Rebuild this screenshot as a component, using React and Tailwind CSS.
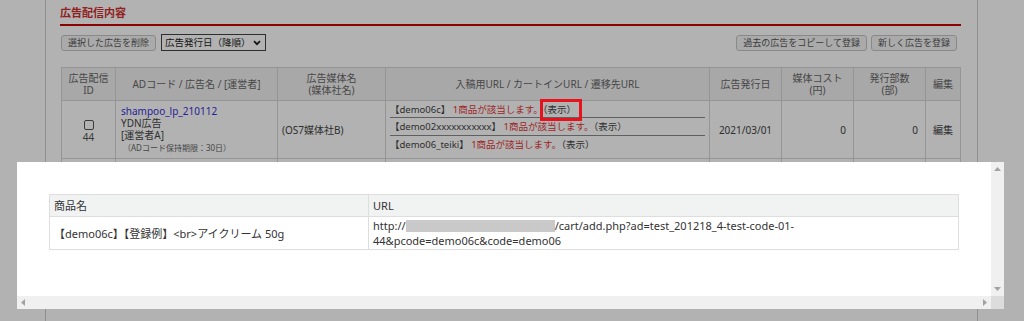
import React from "react";

const urlRows = [
  { code: "【demo06c】", mark: true },
  { code: "【demo02xxxxxxxxxxx】", mark: false },
  { code: "【demo06_teiki】", mark: false },
];

function TriUp() {
  return (
    <svg width="7" height="4" viewBox="0 0 7 4">
      <path d="M3.5 0 L7 4 L0 4 Z" fill="#a3a3a3" />
    </svg>
  );
}

function TriDown() {
  return (
    <svg width="7" height="4" viewBox="0 0 7 4">
      <path d="M0 0 L7 0 L3.5 4 Z" fill="#a3a3a3" />
    </svg>
  );
}

function TriLeft() {
  return (
    <svg width="4" height="7" viewBox="0 0 4 7">
      <path d="M4 0 L4 7 L0 3.5 Z" fill="#a3a3a3" />
    </svg>
  );
}

function TriRight() {
  return (
    <svg width="4" height="7" viewBox="0 0 4 7">
      <path d="M0 0 L4 3.5 L0 7 Z" fill="#a3a3a3" />
    </svg>
  );
}

export default function App() {
  return (
    <div className="relative h-[321px] w-[1024px] overflow-hidden bg-white font-['Noto_Sans','Noto_Sans_CJK_JP',sans-serif] text-[#444]">
      {/* page behind the dialog */}
      <div className="ml-[45px] h-full w-[933px] border-x border-[#cfcfcf] pl-[14px] pr-[16px]">
        <h2 className="pt-[7px] text-[11px] font-bold leading-[12px] text-[#d03030]">広告配信内容</h2>
        <div className="mt-[5px] h-[2px] bg-[#c80000]" />

        <div className="mt-[8px] flex h-[17px] items-center justify-between pl-px pr-[4px]">
          <div className="flex items-center gap-[5px]">
            <button className="h-[16px] whitespace-nowrap rounded-[3px] border border-[#c4c4c4] bg-[#f4f4f4] px-[6px] text-[9px] leading-[14px] text-[#555]">
              選択した広告を削除
            </button>
            <div className="flex h-[17px] w-[105px] items-center justify-between whitespace-nowrap border border-[#444] bg-white pl-[3px] pr-[4px] text-[9.5px] leading-[15px] text-[#222]">
              <span>広告発行日（降順）</span>
              <svg width="8" height="6" viewBox="0 0 8 6">
                <path d="M1 1.2 L4 4.2 L7 1.2" stroke="#222" strokeWidth="1.8" fill="none" />
              </svg>
            </div>
          </div>
          <div className="flex items-center gap-[4px]">
            <button className="h-[16px] whitespace-nowrap rounded-[3px] border border-[#c4c4c4] bg-[#f4f4f4] px-[6px] text-[9px] leading-[14px] text-[#555]">
              過去の広告をコピーして登録
            </button>
            <button className="h-[16px] whitespace-nowrap rounded-[3px] border border-[#c4c4c4] bg-[#f4f4f4] px-[6px] text-[9px] leading-[14px] text-[#555]">
              新しく広告を登録
            </button>
          </div>
        </div>

        <table className="ml-px mt-[16px] w-[899px] table-fixed border-collapse text-[10px] leading-[12px]">
          <colgroup>
            <col className="w-[54px]" />
            <col className="w-[162px]" />
            <col className="w-[108px]" />
            <col className="w-[324px]" />
            <col className="w-[72px]" />
            <col className="w-[72px]" />
            <col className="w-[72px]" />
            <col className="w-[35px]" />
          </colgroup>
          <thead>
            <tr className="h-[33px] bg-[#f1f1f1] text-[#666]">
              <th className="border border-[#d6d6d6] font-normal">広告配信<br />ID</th>
              <th className="border border-[#d6d6d6] font-normal">ADコード / 広告名 / [運営者]</th>
              <th className="border border-[#d6d6d6] font-normal">広告媒体名<br />(媒体社名)</th>
              <th className="border border-[#d6d6d6] font-normal">入稿用URL / カートインURL / 遷移先URL</th>
              <th className="border border-[#d6d6d6] font-normal">広告発行日</th>
              <th className="border border-[#d6d6d6] font-normal">媒体コスト<br />(円)</th>
              <th className="border border-[#d6d6d6] font-normal">発行部数<br />(部)</th>
              <th className="border border-[#d6d6d6] font-normal">編集</th>
            </tr>
          </thead>
          <tbody>
            <tr className="h-[58px]">
              <td className="border border-[#d6d6d6] text-center">
                <div className="flex flex-col items-center pt-[3px]">
                  <span className="h-[10px] w-[10px] rounded-[2px] border border-[#555] bg-white" />
                  <span className="mt-[1px] text-[#555]">44</span>
                </div>
              </td>
              <td className="border border-[#d6d6d6] pl-[5px]">
                <div className="text-[#3a2fd8]">shampoo_lp_210112</div>
                <div>YDN広告</div>
                <div>[運営者A]</div>
                <div className="pl-[2px] pt-[1px] text-[8px] leading-[12px] text-[#666]">（ADコード保持期限：30日）</div>
              </td>
              <td className="border border-[#d6d6d6] pl-[4px]">(OS7媒体社B)</td>
              <td className="border border-[#d6d6d6] px-[4px] align-top text-[9.5px]">
                {urlRows.map((r, i) => (
                  <div
                    key={r.code}
                    className={
                      i === 0
                        ? "h-[17px] border-b border-[#8a8a8a] pt-[3px]"
                        : i === 1
                          ? "h-[18px] border-b border-[#8a8a8a] pt-[3px]"
                          : "h-[18px] pt-[3px]"
                    }
                  >
                    <span>{r.code} </span>
                    <span className="text-[#e33434]">1商品が該当します。</span>
                    <span className="relative">
                      （表示）
                      {r.mark && (
                        <span className="absolute -left-[3px] -top-[4px] z-30 h-[22px] w-[42px] border-[3px] border-[#e8121c]" />
                      )}
                    </span>
                  </div>
                ))}
              </td>
              <td className="border border-[#d6d6d6] text-center">2021/03/01</td>
              <td className="border border-[#d6d6d6] pr-[7px] text-right">0</td>
              <td className="border border-[#d6d6d6] pr-[7px] text-right">0</td>
              <td className="border border-[#d6d6d6] text-center">編集</td>
            </tr>
            <tr className="h-[58px]">
              <td className="border border-[#d6d6d6]" />
              <td className="border border-[#d6d6d6]" />
              <td className="border border-[#d6d6d6]" />
              <td className="border border-[#d6d6d6]" />
              <td className="border border-[#d6d6d6]" />
              <td className="border border-[#d6d6d6]" />
              <td className="border border-[#d6d6d6]" />
              <td className="border border-[#d6d6d6]" />
            </tr>
          </tbody>
        </table>
      </div>

      {/* dimming overlay */}
      <div className="fixed inset-0 z-10 bg-black/30" />

      {/* dialog */}
      <div className="fixed left-[17px] top-[162px] z-20 flex h-[147px] w-[987px] flex-col bg-white text-[11px] leading-[15px] text-[#333]">
        <div className="flex min-h-0 flex-1">
          <div className="flex-1 pl-[32px] pt-[32px]">
            <table className="w-[910px] table-fixed border-collapse">
              <colgroup>
                <col className="w-[319px]" />
                <col />
              </colgroup>
              <thead>
                <tr className="h-[22px] bg-[#f1f2f2]">
                  <th className="border border-[#dedede] pl-[4px] text-left font-normal">商品名</th>
                  <th className="border border-[#dedede] pl-[4px] text-left font-normal">URL</th>
                </tr>
              </thead>
              <tbody>
                <tr className="h-[33px]">
                  <td className="border border-[#dedede] pl-[4px]">【demo06c】【登録例】&lt;br&gt;アイクリーム 50g</td>
                  <td className="border border-[#dedede] pl-[4px]">
                    <div className="flex items-center">
                      <span>http://</span>
                      <span className="h-[12px] w-[149px] bg-[#c9c9c9]" />
                      <span>/cart/add.php?ad=test_201218_4-test-code-01-</span>
                    </div>
                    <div>44&amp;pcode=demo06c&amp;code=demo06</div>
                  </td>
                </tr>
              </tbody>
            </table>
          </div>
          <div className="flex w-[13px] flex-col items-center justify-between bg-[#f0f0f0] py-[5px]">
            <TriUp />
            <TriDown />
          </div>
        </div>
        <div className="flex h-[13px]">
          <div className="flex flex-1 items-center justify-between bg-[#f0f0f0] px-[4px]">
            <TriLeft />
            <TriRight />
          </div>
          <div className="w-[13px] bg-[#dcdcdc]" />
        </div>
      </div>
    </div>
  );
}
